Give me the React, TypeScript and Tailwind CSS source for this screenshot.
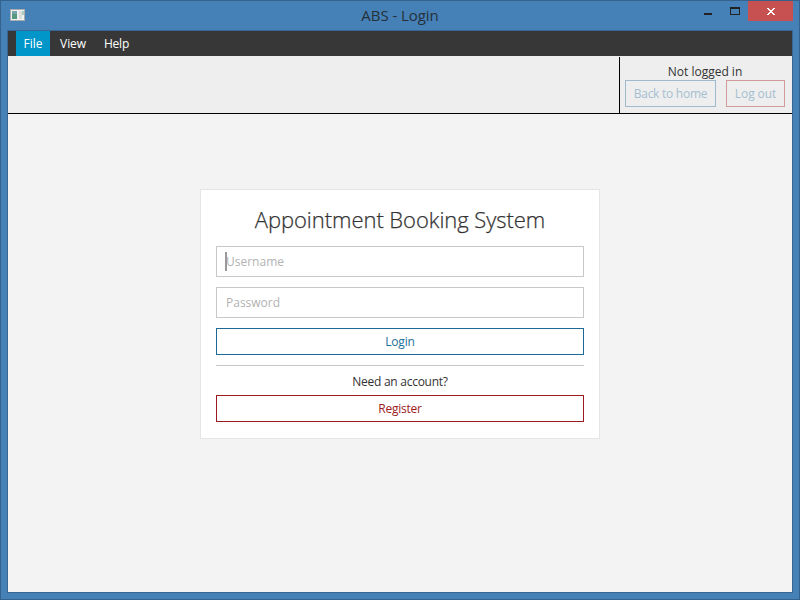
import React from 'react';

function AppIcon() {
  return (
    <svg width="16" height="14" viewBox="0 0 16 14" shapeRendering="crispEdges">
      <rect x="0" y="0" width="15" height="12" fill="#a9adaf" />
      <rect x="1" y="1" width="13" height="10" fill="#f1f1f0" />
      <rect x="2" y="2" width="5" height="8" fill="#78a5ad" />
      <rect x="2" y="5" width="5" height="5" fill="#56997f" />
      <rect x="9" y="2" width="3" height="8" fill="#dcdcdc" />
      <rect x="12" y="2" width="2" height="4" fill="#a5ccbf" />
    </svg>
  );
}

function TitleBar() {
  return (
    <div className="flex h-[29px] shrink-0">
      <div className="w-[160px] pl-[9px] pt-[8px]">
        <AppIcon />
      </div>
      <div className="flex-1 pt-[4px] text-center text-[15px] leading-[21px] tracking-[-0.06px] text-[#26303a]">ABS - Login</div>
      <div className="flex w-[160px] justify-end">
        <svg width="57" height="20" viewBox="0 0 57 20" shapeRendering="crispEdges" className="shrink-0">
          <rect x="13" y="12" width="8" height="2" fill="#222" />
          <path d="M39 6h10v8h-10z M40 8v5h8v-5z" fill="#222" fillRule="evenodd" />
        </svg>
        <div className="mr-[6px] h-[20px] w-[45px] bg-[#c75050]">
          <svg width="45" height="20" viewBox="0 0 45 20" shapeRendering="crispEdges">
            <path
              d="M19 7h2v1h-2z M25 7h2v1h-2z M20 8h2v1h-2z M24 8h2v1h-2z M21 9h4v1h-4z M22 10h2v1h-2z M21 11h4v1h-4z M20 12h2v1h-2z M24 12h2v1h-2z M19 13h2v1h-2z M25 13h2v1h-2z"
              fill="#fff"
            />
          </svg>
        </div>
      </div>
    </div>
  );
}

function MenuBar() {
  return (
    <div className="flex h-[25px] shrink-0 bg-[#373737] pl-2 leading-[25px] text-white">
      <div className="w-[34px] bg-[#0096c9] text-center">File</div>
      <div className="w-[46px] text-center tracking-[-0.1px]">View</div>
      <div className="w-[41px] text-center tracking-[-0.2px]">Help</div>
    </div>
  );
}

function Header() {
  return (
    <div className="flex h-[58px] shrink-0 border-b border-black bg-[#eee] pt-px">
      <div className="flex-1" />
      <div className="w-[173px] border-l border-black pl-[5px] pt-[6px]">
        <div className="w-[160px] text-center leading-[17px] text-[#333]">Not logged in</div>
        <div className="flex gap-[10px]">
          <button className="h-[27px] w-[91px] whitespace-nowrap border border-[#9fb9cd] leading-[25px] tracking-[-0.26px] text-[#a5bfd1]">Back to home</button>
          <button className="h-[27px] w-[59px] whitespace-nowrap border border-[#d19a9c] leading-[25px] tracking-[-0.1px] text-[#a5bfd1]">Log out</button>
        </div>
      </div>
    </div>
  );
}

function LoginCard() {
  return (
    <div className="flex h-[250px] w-[400px] flex-col border border-[#e5e5e5] bg-white px-[15px] pt-[13px]">
      <h1 className="h-[43px] whitespace-nowrap text-center text-[22px] font-light leading-[32px] tracking-[-0.05px] text-[#333] [-webkit-text-stroke:0.25px_#333]">
        Appointment Booking System
      </h1>
      <div className="flex h-[31px] items-center border border-[#c8c8c8] pl-[8px] text-[#b2b2b2]">
        <span className="h-[19px] w-[2px] bg-[#999]" />
        <span className="-ml-px">Username</span>
      </div>
      <div className="mt-[10px] flex h-[31px] items-center border border-[#c8c8c8] pl-[9px] text-[#b2b2b2]">Password</div>
      <button className="mt-[10px] h-[27px] shrink-0 border border-[#1d6a96] leading-[25px] tracking-[-0.15px] text-[#1d7099]">Login</button>
      <div className="mt-[10px] h-px shrink-0 bg-[#c8c8c8]" />
      <div className="mt-[7px] h-[22px] text-center leading-[17px] tracking-[-0.26px] text-[#333]">Need an account?</div>
      <button className="h-[27px] shrink-0 border border-[#9b1c20] leading-[25px] tracking-[-0.25px] text-[#9b1c20]">Register</button>
    </div>
  );
}

export default function App() {
  return (
    <div className="h-[600px] w-[801px] overflow-hidden bg-white font-['Open_Sans','Noto_Sans',sans-serif] text-[12px]">
      <div className="flex h-[600px] w-[800px] flex-col border border-[#35628c] bg-[#4580b6]">
        <TitleBar />
        <div className="mx-[6px] flex h-[563px] flex-col border border-[#386795] bg-[#f3f3f3]">
          <MenuBar />
          <Header />
          <div className="flex justify-center pt-[75px]">
            <LoginCard />
          </div>
        </div>
      </div>
    </div>
  );
}
